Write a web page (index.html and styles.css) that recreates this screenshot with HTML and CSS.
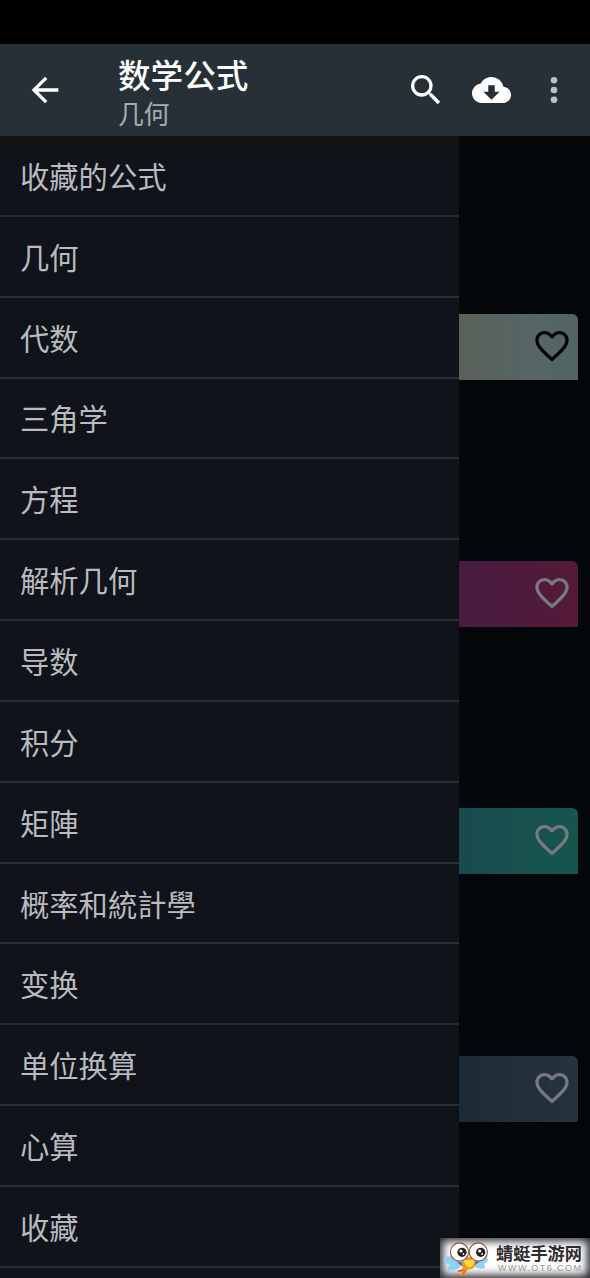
FILE: index.html
```html
<!DOCTYPE html>
<html lang="zh-CN">
<head>
<meta charset="utf-8">
<title>数学公式</title>
<link rel="stylesheet" href="styles.css">
</head>
<body>
<div class="status-bar"></div>
<header class="toolbar">
  <svg class="back" viewBox="0 0 24 24"><path d="M20 11H7.83l5.59-5.59L12 4l-8 8 8 8 1.41-1.41L7.83 13H20z"/></svg>
  <div class="titles">
    <h1 class="title">数学公式</h1>
    <p class="subtitle">几何</p>
  </div>
  <svg class="search" viewBox="0 0 24 24"><path d="M15.5 14h-.79l-.28-.27A6.47 6.47 0 0 0 16 9.5 6.5 6.5 0 1 0 9.5 16c1.61 0 3.09-.59 4.23-1.57l.27.28v.79l5 4.99L20.49 19zm-6 0C7.01 14 5 11.99 5 9.5S7.01 5 9.5 5 14 7.01 14 9.5 11.99 14 9.5 14z"/></svg>
  <svg class="cloud" viewBox="0 0 24 16"><path d="M19.35 6.04A7.49 7.49 0 0 0 12 0C9.11 0 6.6 1.64 5.35 4.04A5.994 5.994 0 0 0 0 10c0 3.31 2.69 6 6 6h13c2.76 0 5-2.24 5-5 0-2.64-2.05-4.78-4.65-4.96zM17 9l-5 5-5-5h3V5h4v4z"/></svg>
  <svg class="more" viewBox="0 0 8 28"><circle cx="4" cy="4.200" r="3.300"/><circle cx="4" cy="14" r="3.300"/><circle cx="4" cy="23.800" r="3.300"/></svg>
</header>
<main class="body">
  <nav class="drawer">
    <a class="item">收藏的公式</a>
    <a class="item">几何</a>
    <a class="item">代数</a>
    <a class="item">三角学</a>
    <a class="item">方程</a>
    <a class="item">解析几何</a>
    <a class="item">导数</a>
    <a class="item">积分</a>
    <a class="item">矩陣</a>
    <a class="item">概率和統計學</a>
    <a class="item">变换</a>
    <a class="item">单位换算</a>
    <a class="item">心算</a>
    <a class="item">收藏</a>
  </nav>
  <section class="cards">
    <div class="card sand"><svg class="heart" viewBox="0 0 24 24"><path d="M16.5 3c-1.74 0-3.41.81-4.5 2.09C10.91 3.81 9.24 3 7.5 3 4.42 3 2 5.42 2 8.5c0 3.78 3.4 6.86 8.55 11.54L12 21.35l1.45-1.32C18.6 15.36 22 12.28 22 8.5 22 5.42 19.58 3 16.5 3zm-4.4 15.55l-.1.1-.1-.1C7.14 14.24 4 11.39 4 8.5 4 6.5 5.5 5 7.5 5c1.54 0 3.04.99 3.57 2.36h1.87C13.46 5.99 14.96 5 16.5 5c2 0 3.5 1.5 3.5 3.5 0 2.89-3.14 5.74-7.9 10.05z"/></svg></div>
    <div class="card plum"><svg class="heart" viewBox="0 0 24 24"><path d="M16.5 3c-1.74 0-3.41.81-4.5 2.09C10.91 3.81 9.24 3 7.5 3 4.42 3 2 5.42 2 8.5c0 3.78 3.4 6.86 8.55 11.54L12 21.35l1.45-1.32C18.6 15.36 22 12.28 22 8.5 22 5.42 19.58 3 16.5 3zm-4.4 15.55l-.1.1-.1-.1C7.14 14.24 4 11.39 4 8.5 4 6.5 5.5 5 7.5 5c1.54 0 3.04.99 3.57 2.36h1.87C13.46 5.99 14.96 5 16.5 5c2 0 3.5 1.5 3.5 3.5 0 2.89-3.14 5.74-7.9 10.05z"/></svg></div>
    <div class="card teal"><svg class="heart" viewBox="0 0 24 24"><path d="M16.5 3c-1.74 0-3.41.81-4.5 2.09C10.91 3.81 9.24 3 7.5 3 4.42 3 2 5.42 2 8.5c0 3.78 3.4 6.86 8.55 11.54L12 21.35l1.45-1.32C18.6 15.36 22 12.28 22 8.5 22 5.42 19.58 3 16.5 3zm-4.4 15.55l-.1.1-.1-.1C7.14 14.24 4 11.39 4 8.5 4 6.5 5.5 5 7.5 5c1.54 0 3.04.99 3.57 2.36h1.87C13.46 5.99 14.96 5 16.5 5c2 0 3.5 1.5 3.5 3.5 0 2.89-3.14 5.74-7.9 10.05z"/></svg></div>
    <div class="card slate"><svg class="heart" viewBox="0 0 24 24"><path d="M16.5 3c-1.74 0-3.41.81-4.5 2.09C10.91 3.81 9.24 3 7.5 3 4.42 3 2 5.42 2 8.5c0 3.78 3.4 6.86 8.55 11.54L12 21.35l1.45-1.32C18.6 15.36 22 12.28 22 8.5 22 5.42 19.58 3 16.5 3zm-4.4 15.55l-.1.1-.1-.1C7.14 14.24 4 11.39 4 8.5 4 6.5 5.5 5 7.5 5c1.54 0 3.04.99 3.57 2.36h1.87C13.46 5.99 14.96 5 16.5 5c2 0 3.5 1.5 3.5 3.5 0 2.89-3.14 5.74-7.9 10.05z"/></svg></div>
  </section>
</main>
<aside class="watermark">
  <svg class="mascot" viewBox="0 0 48 36">
    <g fill="#8fd2f5"><ellipse cx="9" cy="19" rx="8.500" ry="4.500" transform="rotate(12 9 19)"/><ellipse cx="12" cy="24" rx="8" ry="3.600" transform="rotate(-25 12 24)"/><ellipse cx="37" cy="18" rx="8" ry="4.500" transform="rotate(-5 37 18)"/><ellipse cx="35" cy="22.500" rx="7.500" ry="3.600" transform="rotate(22 35 22.500)"/></g>
    <path d="M14 20l7 1-1 4zM37 19l-7 1 1 4z" fill="#1c6ac0"/>
    <path d="M20 17q6-4 12 0 2 7-3 10l-5 1-2 4-4 .5 1-2-5-1 6-2q-2-5 0-10.500z" fill="#f59a20"/>
    <path d="M20 17q6 3 12-1-1 8-5 9.500Q22 24 20 17z" fill="#ffd93e"/>
    <path d="M21 28l-6 1M23 28l-3 4" stroke="#e36316" stroke-width="1.300"/>
    <circle cx="16.500" cy="10" r="9.100" fill="#fff" stroke="#8e5136" stroke-width="1.100"/>
    <circle cx="35.300" cy="10" r="9.100" fill="#fff" stroke="#8e5136" stroke-width="1.100"/>
    <circle cx="19" cy="10.300" r="4.600" fill="#222"/><circle cx="37.700" cy="10.300" r="4.600" fill="#222"/>
    <circle cx="18" cy="9" r="1.600" fill="#fff"/><circle cx="36.700" cy="9" r="1.600" fill="#fff"/>
    <circle cx="20.500" cy="12" r=".9" fill="#fff"/><circle cx="39.200" cy="12" r=".9" fill="#fff"/>
  </svg>
  <div class="site"><strong class="site-name">蜻蜓手游网</strong><span class="site-url">WWW.OT6.COM</span></div>
</aside>
</body>
</html>
```
FILE: styles.css
```css
* { box-sizing: border-box; }
body {
  margin: 0;
  width: 590px;
  height: 1278px;
  overflow: hidden;
  position: relative;
  display: flex;
  flex-direction: column;
  background: #04070a;
  font-family: "Noto Sans CJK SC", sans-serif;
}
svg { display: block; flex: none; }
.status-bar { flex: none; height: 44px; background: #000; }
.toolbar {
  flex: none;
  height: 92px;
  display: flex;
  align-items: center;
  padding: 0 32px 0 25px;
  background: #283037;
  fill: #fff;
}
.back { width: 40px; height: 40px; }
.titles { flex: 1; padding: 3px 0 0 53px; }
.title { margin: 0; font-size: 32.6px; font-weight: 500; line-height: 42px; color: #fff; }
.subtitle { margin: 0; font-size: 25.8px; line-height: 36px; color: #a4abb1; }
.search { width: 40px; height: 40px; margin-right: 26px; }
.cloud { width: 39px; height: 26px; margin-right: 39px; }
.more { width: 8px; height: 28px; fill: #b9c0ca; }
.body { flex: 1; min-height: 0; display: flex; }
.drawer { flex: none; width: 459px; background: linear-gradient(#111315, #10131a 20px); }
.item {
  display: flex;
  align-items: center;
  height: 80.85px;
  padding-bottom: 1px;
  padding-left: 20px;
  border-bottom: 2px solid #292d33;
  font-size: 29.3px;
  line-height: 40px;
  color: #b9bbbe;
}
.cards {
  flex: 1;
  display: flex;
  flex-direction: column;
  gap: 181.4px;
  padding: 177.6px 12px 0 0;
}
.card {
  flex: none;
  height: 66px;
  display: flex;
  justify-content: flex-end;
  padding: 12px 6px 0 0;
  border-radius: 0 6px 0 0;
  fill: #77797e;
}
.heart { width: 40px; height: 40px; }
.sand { background: linear-gradient(90deg, #596259, #566666 70%, #526364); fill: #020303; }
.plum { background: linear-gradient(90deg, #481c41, #551a38); }
.teal { background: linear-gradient(90deg, #184a4f, #15564d); }
.slate { background: linear-gradient(90deg, #1c2b36, #24333e); border-radius: 0 6px 2px 0; }
.watermark {
  position: absolute;
  right: 0;
  bottom: 0;
  width: 150px;
  height: 40px;
  display: flex;
  padding: 4px 0 0 3px;
  background: #fff;
  box-shadow: inset 0 0 9px 3px #25282c;
}
.mascot { width: 48px; height: 36px; }
.site { padding-left: 5px; }
.site-name { display: block; font-size: 17.2px; font-weight: 700; line-height: 21px; color: #302b2d; white-space: nowrap; }
.site-url { display: block; padding-left: 2px; font: 9px/11px "Liberation Sans", sans-serif; letter-spacing: 1.45px; color: #999; white-space: nowrap; }
```
